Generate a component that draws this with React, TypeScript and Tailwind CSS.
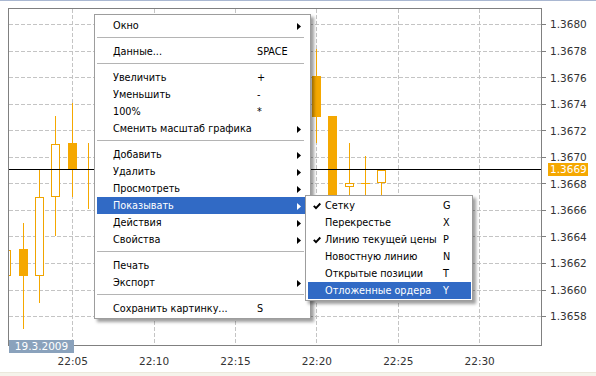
import React from "react";

const ORANGE = "#f5a800";
const GRID = "#c4c4c4";
const rows = [24, 51, 77, 104, 130, 157, 183, 210, 236, 263, 290, 316];
const prices = ["1.3680", "1.3678", "1.3676", "1.3674", "1.3672", "1.3670", "1.3668", "1.3666", "1.3664", "1.3662", "1.3660", "1.3658"];
const vgrid = [72, 154, 235, 316, 398, 479];
const times = ["22:05", "22:10", "22:15", "22:20", "22:25", "22:30"];

type Candle = { c: number; top: number; bot: number; wt: number; wb: number; kind: "fill" | "hollow" | "doji" | "wick" };
const candles: Candle[] = [
  { c: 6, top: 250, bot: 276, wt: 235, wb: 295, kind: "hollow" },
  { c: 23, top: 249, bot: 276, wt: 223, wb: 329, kind: "fill" },
  { c: 39, top: 197, bot: 276, wt: 169, wb: 303, kind: "hollow" },
  { c: 55, top: 144, bot: 197, wt: 116, wb: 236, kind: "hollow" },
  { c: 72, top: 143, bot: 169, wt: 103, wb: 197, kind: "fill" },
  { c: 88, top: 150, bot: 150, wt: 143, wb: 209, kind: "wick" },
  { c: 316, top: 76, bot: 117, wt: 49, wb: 143, kind: "fill" },
  { c: 332, top: 116, bot: 240, wt: 116, wb: 250, kind: "fill" },
  { c: 349, top: 183, bot: 187, wt: 143, wb: 230, kind: "hollow" },
  { c: 365, top: 183, bot: 184, wt: 156, wb: 230, kind: "doji" },
  { c: 381, top: 170, bot: 183, wt: 170, wb: 230, kind: "hollow" },
];

function Chart() {
  return (
    <svg width="538" height="338" className="block" shapeRendering="crispEdges">
      <defs>
        <clipPath id="plot">
          <rect x="9" y="9" width="532" height="336" />
        </clipPath>
      </defs>
      <g transform="translate(-8,-8)">
        <g clipPath="url(#plot)">
          {rows.map((y) => (
            <line key={"h" + y} x1={9} x2={541} y1={y + 0.5} y2={y + 0.5} stroke={GRID} strokeDasharray="4 2" />
          ))}
          {vgrid.map((x) => (
            <line key={"v" + x} x1={x + 0.5} x2={x + 0.5} y1={9} y2={345} stroke={GRID} strokeDasharray="4 2" />
          ))}
          {candles.map((k) => (
            <g key={k.c}>
              <rect x={k.c} y={k.wt} width={1} height={k.wb - k.wt} fill={ORANGE} />
              {k.kind === "fill" && <rect x={k.c - 4} y={k.top} width={9} height={k.bot - k.top} fill={ORANGE} />}
              {k.kind === "hollow" && (
                <>
                  <rect x={k.c - 4} y={k.top} width={9} height={k.bot - k.top} fill="#f0a400" />
                  <rect x={k.c - 3} y={k.top + 1} width={7} height={k.bot - k.top - 2} fill="#fff" />
                </>
              )}
              {k.kind === "doji" && <rect x={k.c - 4} y={k.top} width={9} height={1} fill={ORANGE} />}
            </g>
          ))}
          <rect x={9} y={169} width={532} height={1} fill="#000" />
        </g>
        <rect x={8.5} y={8.5} width={533} height={337} fill="none" stroke="#808080" />
        {rows.map((y) => (
          <rect key={"t" + y} x={541} y={y} width={5} height={1} fill="#808080" />
        ))}
      </g>
    </svg>
  );
}

function Arrow({ white }: { white?: boolean }) {
  return (
    <svg width="4" height="7" viewBox="0 0 4 7" className="block">
      <path d="M0 0L4 3.5L0 7Z" fill={white ? "#fff" : "#000"} />
    </svg>
  );
}

function Check() {
  return (
    <svg width="8" height="8" viewBox="0 0 8 8" className="block">
      <path d="M0.8 3.8L3 6.2L7.3 1.5" fill="none" stroke="#000" strokeWidth="1.9" />
    </svg>
  );
}

type MItem = { label: string; shortcut?: string; arrow?: boolean; hl?: boolean } | "sep";

const mainItems: MItem[] = [
  { label: "Окно", arrow: true },
  "sep",
  { label: "Данные...", shortcut: "SPACE" },
  "sep",
  { label: "Увеличить", shortcut: "+" },
  { label: "Уменьшить", shortcut: "-" },
  { label: "100%", shortcut: "*" },
  { label: "Сменить масштаб графика", arrow: true },
  "sep",
  { label: "Добавить", arrow: true },
  { label: "Удалить", arrow: true },
  { label: "Просмотреть", arrow: true },
  { label: "Показывать", arrow: true, hl: true },
  { label: "Действия", arrow: true },
  { label: "Свойства", arrow: true },
  "sep",
  { label: "Печать" },
  { label: "Экспорт", arrow: true },
  "sep",
  { label: "Сохранить картинку...", shortcut: "S" },
];

const subItems = [
  { label: "Сетку", key: "G", check: true },
  { label: "Перекрестье", key: "X" },
  { label: "Линию текущей цены", key: "P", check: true },
  { label: "Новостную линию", key: "N" },
  { label: "Открытые позиции", key: "T" },
  { label: "Отложенные ордера", key: "Y", hl: true },
];

function MainMenu() {
  return (
    <div className="absolute left-[94px] top-[14px] w-[217px] border border-[#9d9d9d] bg-white pl-[2px] pr-[4px] pt-[2px] pb-px shadow-[3px_3px_3px_rgba(0,0,0,0.38)]">
      {mainItems.map((it, i) =>
        it === "sep" ? (
          <div key={i} className="h-[9px] pt-[3px] pr-[2px]">
            <div className="h-px bg-[#b4b4b4]" />
          </div>
        ) : (
          <div
            key={i}
            className={`flex h-[17px] items-center pt-px ${it.hl ? "bg-[#316ac5] text-white" : "text-black"}`}
          >
            <div className="w-[160px] pl-[16px] whitespace-nowrap">{it.label}</div>
            <div className="w-[40px] whitespace-nowrap">{it.shortcut ?? ""}</div>
            <div className="w-[9px]">{it.arrow && <Arrow white={it.hl} />}</div>
          </div>
        )
      )}
    </div>
  );
}

function SubMenu() {
  return (
    <div className="absolute left-[305px] top-[195px] w-[168px] border border-[#9d9d9d] bg-white pl-[2px] pr-px py-px shadow-[3px_3px_3px_rgba(0,0,0,0.38)]">
      {subItems.map((it) => (
        <div
          key={it.key}
          className={`flex h-[17px] items-center pt-px ${it.hl ? "bg-[#316ac5] text-white" : "text-black"}`}
        >
          <div className="w-[17px] pl-[5px]">{it.check && <Check />}</div>
          <div className="w-[118px] whitespace-nowrap">{it.label}</div>
          <div className="whitespace-nowrap">{it.key}</div>
        </div>
      ))}
    </div>
  );
}

export default function App() {
  return (
    <div className="relative h-[376px] w-[596px] overflow-hidden bg-white font-['DejaVu_Sans',sans-serif]">
      <div className="h-px bg-[#a9b7d1]" />
      <div className="mt-[7px] flex">
        <div className="ml-[8px] h-[338px] w-[538px]">
          <Chart />
        </div>
        <div className="flex w-[50px] flex-col pl-[4px] pt-[3.7px] text-[10.5px] leading-[13px] text-[#333]">
          {prices.map((p) => (
            <div key={p} className="flex h-[26.55px] items-center">
              {p}
            </div>
          ))}
        </div>
      </div>
      <div className="flex h-[26px] pl-[32px] pt-[9px] text-[10.5px] leading-[13px] text-[#333]">
        {times.map((t) => (
          <div key={t} className="w-[81.4px] text-center">
            {t}
          </div>
        ))}
      </div>
      <div className="h-[4px] border-t border-[#ebe8dc] bg-[#f5f3eb]" />

      <div className="absolute left-[9px] top-[340px] h-[13px] w-[65px] bg-[#8aa2bc] text-center text-[10.5px] leading-[13px] text-white">
        19.3.2009
      </div>
      <div className="absolute left-[548px] top-[163px] h-[13px] w-[40px] bg-[#f5a800] pl-[2px] text-[10.5px] leading-[13px] text-white">
        1.3669
      </div>

      <div className="text-[9.7px]">
        <MainMenu />
        <SubMenu />
      </div>
    </div>
  );
}
